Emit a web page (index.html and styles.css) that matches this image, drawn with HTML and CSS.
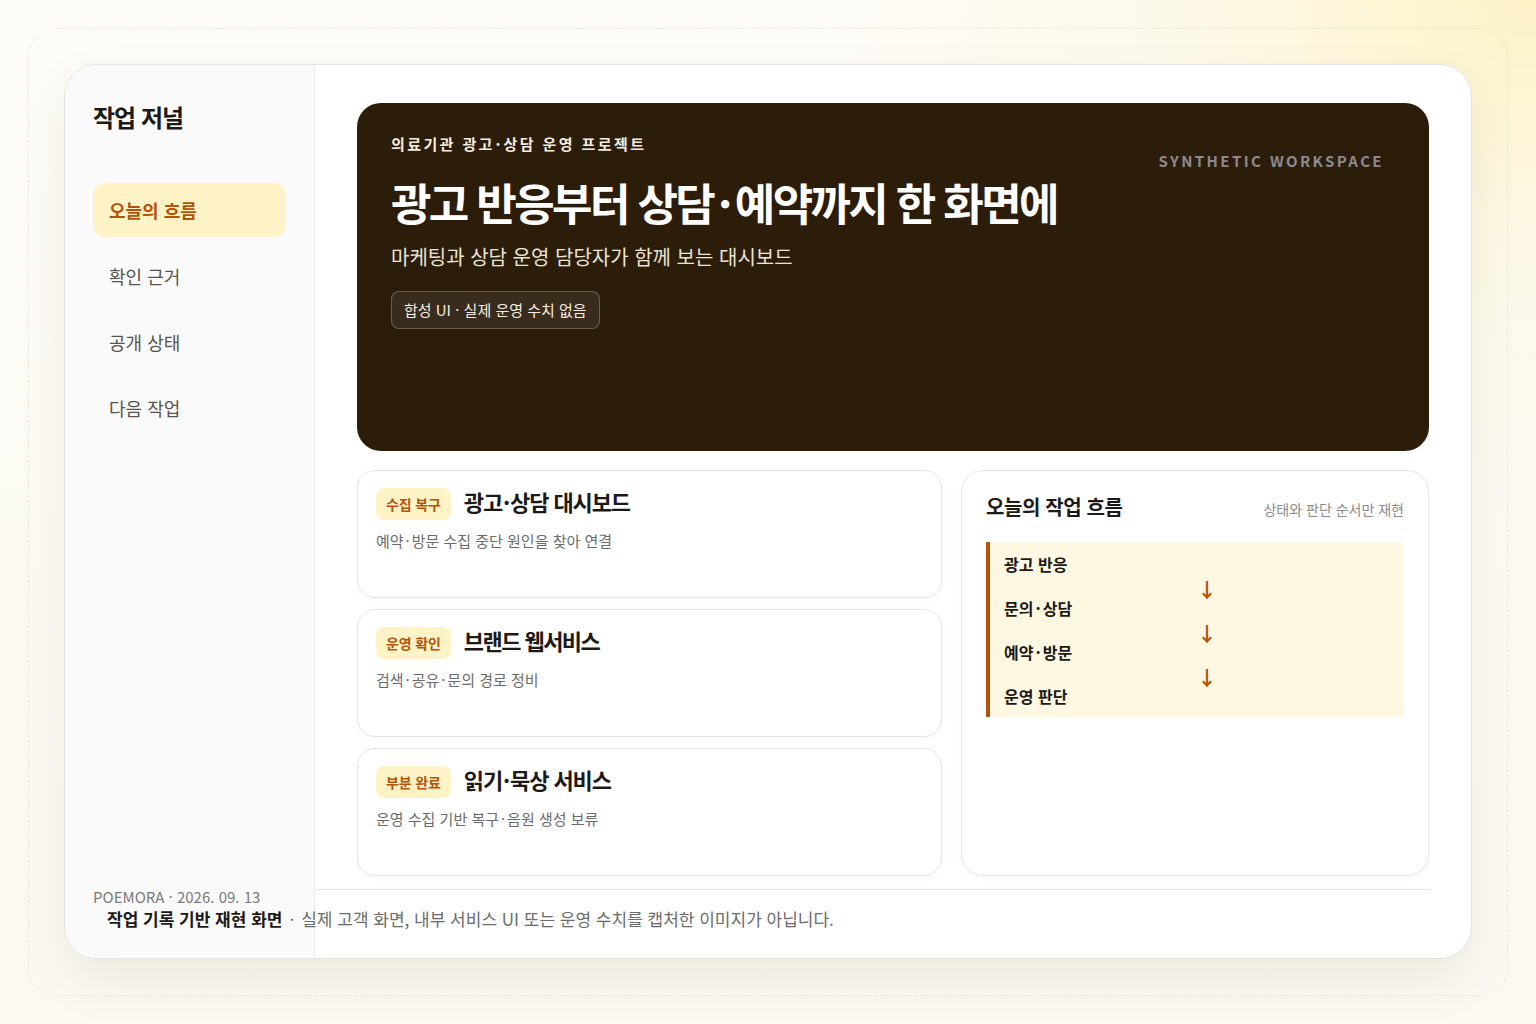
FILE: index.html
```html
<!DOCTYPE html>
<html lang="ko">
<head>
<meta charset="utf-8">
<title>작업 저널</title>
<link rel="stylesheet" href="styles.css">
</head>
<body>
<div class="frame">
  <div class="card">
    <aside class="sidebar">
      <h1 class="side-title">작업 저널</h1>
      <nav class="nav">
        <a class="nav-item active">오늘의 흐름</a>
        <a class="nav-item">확인 근거</a>
        <a class="nav-item">공개 상태</a>
        <a class="nav-item">다음 작업</a>
      </nav>
    </aside>

    <main class="main">
      <section class="hero">
        <div class="hero-text">
          <p class="eyebrow">의료기관 광고<span class="dot">·</span>상담 운영 프로젝트</p>
          <h2 class="hero-title">광고 반응부터 상담<span class="dot">·</span>예약까지 한 화면에</h2>
          <p class="hero-sub">마케팅과 상담 운영 담당자가 함께 보는 대시보드</p>
          <span class="pill">합성 UI · 실제 운영 수치 없음</span>
        </div>
        <div class="hero-label">SYNTHETIC WORKSPACE</div>
      </section>

      <section class="grid">
        <div class="list">
          <article class="item">
            <div class="item-head"><span class="badge">수집 복구</span><h3 class="item-title">광고<span class="dot">·</span>상담 대시보드</h3></div>
            <p class="item-desc">예약<span class="dot">·</span>방문 수집 중단 원인을 찾아 연결</p>
          </article>
          <article class="item">
            <div class="item-head"><span class="badge">운영 확인</span><h3 class="item-title tight">브랜드 웹서비스</h3></div>
            <p class="item-desc">검색<span class="dot">·</span>공유<span class="dot">·</span>문의 경로 정비</p>
          </article>
          <article class="item">
            <div class="item-head"><span class="badge">부분 완료</span><h3 class="item-title">읽기<span class="dot">·</span>묵상 서비스</h3></div>
            <p class="item-desc">운영 수집 기반 복구<span class="dot">·</span>음원 생성 보류</p>
          </article>
        </div>

        <article class="flow-card">
          <div class="flow-head">
            <h3 class="flow-title">오늘의 작업 흐름</h3>
            <span class="flow-note">상태와 판단 순서만 재현</span>
          </div>
          <div class="flow">
            <div class="step">광고 반응</div>
            <div class="arrow">↓</div>
            <div class="step">문의<span class="dot">·</span>상담</div>
            <div class="arrow">↓</div>
            <div class="step">예약<span class="dot">·</span>방문</div>
            <div class="arrow">↓</div>
            <div class="step">운영 판단</div>
          </div>
        </article>
      </section>
    </main>

    <div class="footer-rule"></div>
    <footer class="footer">
      <div class="meta">POEMORA · 2026. 09. 13</div>
      <p class="note"><strong>작업 기록 기반 재현 화면</strong><span class="sep">·</span>실제 고객 화면, 내부 서비스 UI 또는 운영 수치를 캡처한 이미지가 아닙니다.</p>
    </footer>
  </div>
</div>
</body>
</html>
```

FILE: styles.css
```css
* { box-sizing: border-box; }

html, body {
  margin: 0;
  width: 1536px;
  height: 1024px;
  overflow: hidden;
}

body {
  padding: 28px;
  font-family: "Noto Sans CJK KR", "Noto Sans", sans-serif;
  color: #1c1917;
  background:
    radial-gradient(ellipse 700px 520px at 100% 0%, rgba(253, 240, 190, 0.85) 0%, rgba(253, 244, 210, 0.4) 50%, rgba(253, 250, 240, 0) 100%),
    linear-gradient(180deg, #fdfcf7 0%, #fbf9f1 100%);
}

.dot {
  margin: 0 0.13em;
}

.frame {
  height: 968px;
  border: 1px dashed rgba(120, 100, 60, 0.12);
  border-radius: 28px;
  padding: 35px;
}

.card {
  height: 895px;
  background: #fff;
  border: 1px solid #e3e3e3;
  border-radius: 32px;
  box-shadow: 0 22px 50px rgba(80, 60, 20, 0.08);
  display: grid;
  grid-template-columns: 250px 1fr;
  grid-template-rows: 824px 1fr;
  overflow: hidden;
}

/* sidebar */
.sidebar {
  grid-column: 1;
  grid-row: 1 / 3;
  background: #fafafa;
  border-right: 1px solid #ececec;
  padding: 36px 28px 0 28px;
}

.side-title {
  margin: 0;
  font-size: 24px;
  line-height: 32px;
  font-weight: 700;
  letter-spacing: -0.04em;
  color: #1c1917;
}

.nav {
  margin-top: 50px;
  display: flex;
  flex-direction: column;
  gap: 12px;
}

.nav-item {
  display: flex;
  align-items: center;
  height: 54px;
  padding: 0 16px;
  border-radius: 12px;
  font-size: 18px;
  color: #57534e;
  text-decoration: none;
}

.nav-item.active {
  background: #fef3c7;
  color: #b45309;
  font-weight: 700;
}

/* main */
.main {
  grid-column: 2;
  grid-row: 1;
  padding: 38px 42px 13px 42px;
  display: flex;
  flex-direction: column;
  gap: 19px;
}

.hero {
  height: 348px;
  flex: none;
  background: #2c1d0b;
  border-radius: 24px;
  padding: 31px 45px 0 34px;
  display: flex;
  justify-content: space-between;
  align-items: flex-start;
  color: #fff;
}

.eyebrow {
  margin: 0;
  font-size: 15px;
  line-height: 20px;
  font-weight: 700;
  letter-spacing: 0.16em;
  color: #f4ece0;
}

.eyebrow .dot {
  margin: 0 0.05em;
}

.hero-title {
  margin: 20px 0 0;
  font-size: 44px;
  line-height: 56px;
  font-weight: 700;
  letter-spacing: -0.06em;
  color: #ffffff;
}

.hero-title .dot {
  margin: 0 5px;
}

.hero-sub {
  margin: 13px 0 0;
  font-size: 20px;
  line-height: 28px;
  color: #ebe3d5;
}

.pill {
  display: inline-block;
  margin-top: 20px;
  height: 38px;
  line-height: 36px;
  padding: 0 12px;
  border: 1px solid rgba(255, 255, 255, 0.24);
  border-radius: 8px;
  background: rgba(255, 255, 255, 0.07);
  font-size: 15px;
  color: #f5efe6;
}

.hero-label {
  margin-top: 17px;
  font-size: 15px;
  line-height: 20px;
  font-weight: 700;
  letter-spacing: 0.16em;
  color: #8c8a8f;
}

.grid {
  height: 406px;
  display: grid;
  grid-template-columns: 1.25fr 1fr;
  gap: 19px;
}

.list {
  display: flex;
  flex-direction: column;
  gap: 11px;
}

.item {
  flex: 1;
  border: 1px solid #e6e6e6;
  border-radius: 18px;
  padding: 17px 18px;
  background: #fff;
  box-shadow: 0 2px 6px rgba(0, 0, 0, 0.03);
}

.item-head {
  display: flex;
  align-items: center;
  gap: 13px;
}

.badge {
  height: 32px;
  line-height: 32px;
  padding: 0 10px;
  border-radius: 8px;
  background: #fef3c7;
  color: #b45309;
  font-size: 14px;
  font-weight: 700;
  letter-spacing: -0.01em;
}

.item-title {
  margin: 0;
  font-size: 22px;
  line-height: 28px;
  font-weight: 700;
  letter-spacing: -0.05em;
  color: #1c1917;
  position: relative;
  top: -3px;
}

.item-title.tight {
  letter-spacing: -0.07em;
}

.item-title .dot {
  margin: 0 1px;
}

.item-desc {
  margin: 10px 0 0;
  font-size: 15px;
  line-height: 22px;
  color: #6b6b6b;
}

.flow-card {
  border: 1px solid #e6e6e6;
  border-radius: 22px;
  padding: 22px 24px;
  background: #fff;
  box-shadow: 0 2px 6px rgba(0, 0, 0, 0.03);
}

.flow-head {
  display: flex;
  justify-content: space-between;
  align-items: center;
}

.flow-title {
  margin: 0;
  font-size: 20px;
  line-height: 28px;
  font-weight: 700;
  letter-spacing: -0.02em;
  color: #1c1917;
}

.flow-note {
  font-size: 14px;
  color: #8a8a8a;
  position: relative;
  top: 2px;
}

.flow {
  margin-top: 21px;
  background: #fef8e3;
  border-left: 4px solid #b45309;
  padding: 11px 14px 10px 14px;
}

.step {
  font-size: 16px;
  line-height: 22px;
  font-weight: 700;
  color: #1c1917;
}

.arrow {
  text-align: center;
  padding-left: 20px;
  font-size: 20px;
  line-height: 22px;
  font-weight: 700;
  color: #b45309;
  position: relative;
  top: 4px;
}

/* footer */
.footer-rule {
  grid-column: 2;
  grid-row: 2;
  border-top: 1px solid #e8e8e8;
  margin-right: 40px;
}

.footer {
  grid-column: 1 / 3;
  grid-row: 2;
  padding-left: 28px;
  position: relative;
}

.meta {
  font-size: 15px;
  line-height: 16px;
  color: #7a7a7a;
}

.note {
  margin: 2px 0 0;
  padding-left: 14px;
  font-size: 17px;
  line-height: 24px;
  color: #6b6b6b;
}

.note .sep {
  margin: 0 7px;
}

.note strong {
  color: #1c1917;
  font-weight: 700;
}
```
